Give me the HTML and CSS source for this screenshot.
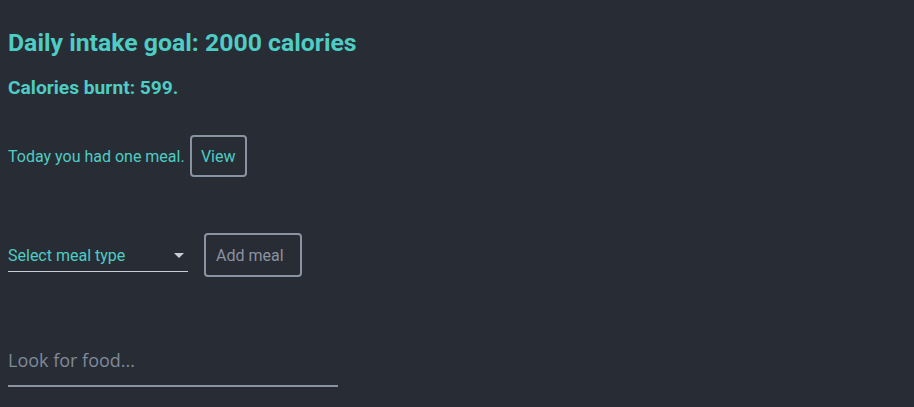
FILE: index.html
```html
<!DOCTYPE html>
<html>
<head>
<meta charset="utf-8">
<link rel="stylesheet" href="styles.css">
</head>
<body>
<div class="app">
  <h2 class="goal">Daily intake goal: 2000 calories</h2>
  <h3 class="burnt">Calories burnt: 599.</h3>
  <div class="meals">
    <span>Today you had one meal.</span>
    <button class="btn view">View</button>
  </div>
  <div class="add-row">
    <div class="select">
      <span class="select-label">Select meal type</span>
      <svg class="caret" width="10" height="5" viewBox="0 0 10 5"><path d="M0 0 L10 0 L5 5 Z" fill="#c9ced6"/></svg>
    </div>
    <button class="btn add">Add meal</button>
  </div>
  <div class="search">
    <input class="search-input" type="text" placeholder="Look for food...">
  </div>
</div>
</body>
</html>
```

FILE: styles.css
```css
html, body {
  margin: 0;
  padding: 0;
  background: #282c34;
}
body {
  font-family: Roboto, "Liberation Sans", sans-serif;
  color: #4ecdc4;
}
.app {
  padding: 8px;
  display: flex;
  flex-direction: column;
  align-items: flex-start;
}
.goal {
  font-size: 24.8px;
  font-weight: 700;
  margin: 20px 0 0 0;
  line-height: 30px;
}
.burnt {
  font-size: 19.2px;
  font-weight: 700;
  margin: 18px 0 0 0;
  line-height: 24px;
}
.meals {
  display: flex;
  align-items: center;
  gap: 5px;
  font-size: 16px;
  margin-top: 35px;
}
.btn {
  background: transparent;
  border: 2px solid #8a93a2;
  border-radius: 4px;
  font-family: Roboto, "Liberation Sans", sans-serif;
  font-size: 16px;
  padding: 0;
  height: 42px;
}
.view {
  color: #4ecdc4;
  width: 57px;
}
.add {
  color: #8a93a2;
  width: 98px;
  height: 44px;
  text-align: left;
  padding-left: 10px;
}
.add-row {
  display: flex;
  align-items: flex-start;
  gap: 16px;
  margin-top: 56px;
}
.select {
  width: 180px;
  height: 39px;
  border-bottom: 1px solid #c9ced6;
  display: flex;
  align-items: flex-end;
  justify-content: space-between;
  padding-bottom: 6px;
  box-sizing: border-box;
  font-size: 16px;
}
.caret {
  margin: 0 4px 7px 0;
}
.search {
  margin-top: 63px;
}
.search-input {
  width: 330px;
  background: transparent;
  border: none;
  border-bottom: 2px solid #8a93a2;
  font-family: "Open Sans", sans-serif;
  font-size: 18px;
  padding: 8px 0 13px 0;
  color: #7f8a9a;
  outline: none;
}
.search-input::placeholder {
  color: #7f8a9a;
}
```
